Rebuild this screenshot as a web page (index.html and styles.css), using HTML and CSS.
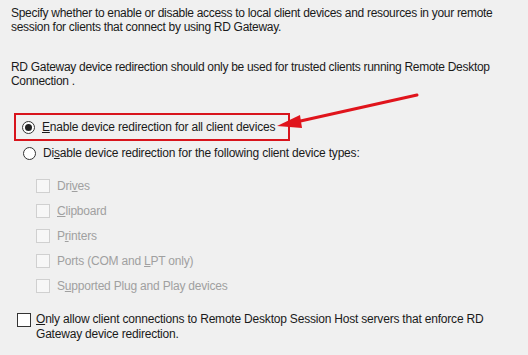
FILE: index.html
```html
<!DOCTYPE html>
<html>
<head>
<meta charset="utf-8">
<link rel="stylesheet" href="styles.css">
</head>
<body>
<div class="page">
  <p class="para">Specify whether to enable or disable access to local client devices and resources in your remote session for clients that connect by using RD Gateway.</p>
  <p class="para second">RD Gateway device redirection should only be used for trusted clients running Remote Desktop Connection .</p>

  <div class="options">
    <label class="radio-row highlighted">
      <span class="radio checked"></span>
      <span><u>E</u>nable device redirection for all client devices</span>
    </label>
    <label class="radio-row">
      <span class="radio"></span>
      <span>Di<u>s</u>able device redirection for the following client device types:</span>
    </label>
  </div>

  <div class="devices">
    <div class="check-row disabled"><span class="box"></span><span>Dri<u>v</u>es</span></div>
    <div class="check-row disabled"><span class="box"></span><span><u>C</u>lipboard</span></div>
    <div class="check-row disabled"><span class="box"></span><span>P<u>r</u>inters</span></div>
    <div class="check-row disabled"><span class="box"></span><span>Ports (COM and <u>L</u>PT only)</span></div>
    <div class="check-row disabled"><span class="box"></span><span>S<u>u</u>pported Plug and Play devices</span></div>
  </div>

  <div class="check-row enforce"><span class="box"></span><span class="enforce-text">Only allow client connections to Remote Desktop Session Host servers that enforce RD Gateway device redirection.</span></div>

  <svg class="arrow" width="528" height="355" viewBox="0 0 528 355">
    <line x1="417" y1="95" x2="296" y2="122" stroke="#e0141c" stroke-width="3" stroke-linecap="round"/>
    <polygon points="277,126 300,115 302,128" fill="#e0141c"/>
  </svg>
</div>
</body>
</html>
```
FILE: styles.css
```css
html, body {
  margin: 0;
  padding: 0;
  background: #f0f0f0;
}
body {
  width: 528px;
  height: 355px;
  overflow: hidden;
  font-family: "Liberation Sans", Arial, sans-serif;
  font-size: 12px;
  color: #1a1a1a;
}
.page {
  position: relative;
  padding: 6px 0 0 11px;
  height: 349px;
}
.para {
  margin: 0;
  line-height: 14px;
  width: 500px;
  letter-spacing: -0.3px;
}
.para.second {
  margin-top: 26px;
}
.options {
  margin-top: 25px;
  display: flex;
  flex-direction: column;
}
.radio-row {
  display: flex;
  align-items: center;
  gap: 7px;
  height: 24px;
  margin-left: 3px;
  padding-left: 9px;
  letter-spacing: -0.2px;
}
.radio-row.highlighted {
  padding-left: 6px;
  width: 266px;
  border: 2px solid #d8141c;
}
.radio {
  width: 11px;
  height: 11px;
  border: 1px solid #333;
  border-radius: 50%;
  background: #fff;
  display: flex;
  align-items: center;
  justify-content: center;
  flex: none;
}
.radio.checked::after {
  content: "";
  width: 7px;
  height: 7px;
  border-radius: 50%;
  background: #222;
}
.devices {
  margin-top: 8px;
  padding-left: 25px;
  display: flex;
  flex-direction: column;
}
.check-row {
  display: flex;
  align-items: center;
  gap: 7px;
  height: 25px;
  letter-spacing: -0.2px;
}
.box {
  width: 12px;
  height: 12px;
  border: 1px solid #333;
  background: #fff;
  flex: none;
}
.check-row.disabled {
  color: #a0a0a0;
}
.check-row.disabled .box {
  border-color: #d0d0d0;
  background: #f7f7f7;
}
.check-row.enforce {
  margin-top: 14px;
  padding-left: 6px;
  gap: 5px;
  align-items: flex-start;
  height: auto;
  width: 480px;
}
.enforce-text {
  line-height: 15px;
}
.enforce-text::first-letter {
  text-decoration: underline;
}
.check-row.enforce .box {
  margin-top: 1px;
}
.arrow {
  position: absolute;
  left: 0;
  top: 0;
  pointer-events: none;
}
```
